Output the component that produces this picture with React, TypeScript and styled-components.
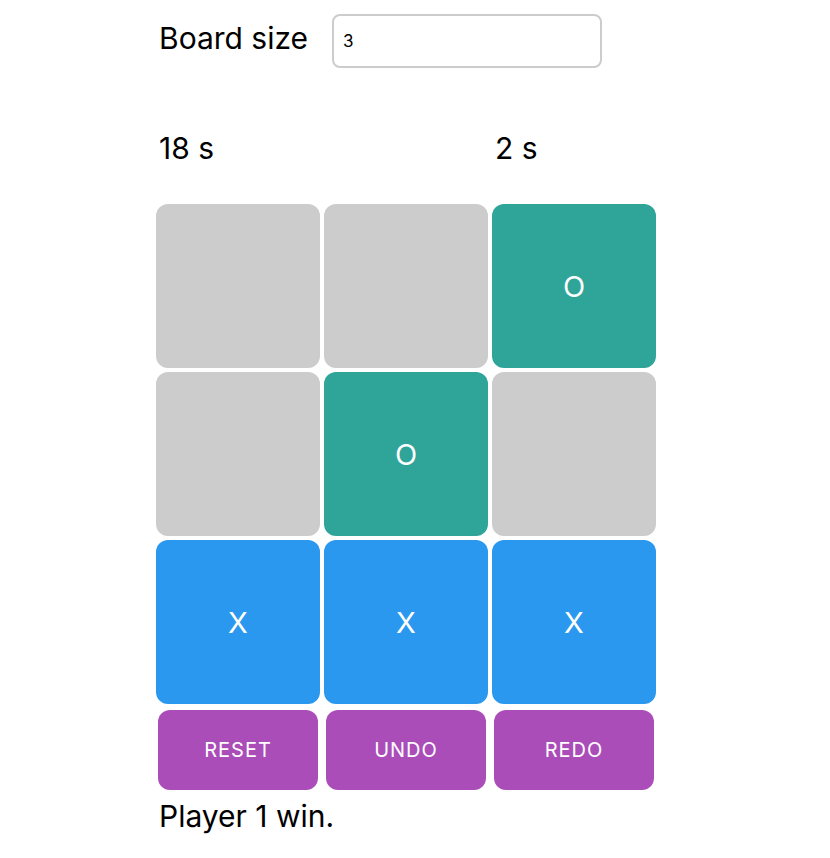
import * as React from "react"
import styled, { createGlobalStyle } from "styled-components"

const GlobalStyle = createGlobalStyle`
  body {
    margin: 0;
    background: #ffffff;
    font-family: Inter, "Noto Sans", sans-serif;
    color: #000000;
  }
`

const Page = styled.div`
  padding: 14px 0 0 156px;
  width: 500px;
`

const SizeRow = styled.label`
  display: flex;
  align-items: flex-start;
  gap: 24px;
  padding-left: 3px;
  font-size: 30px;
  line-height: 48px;
`

const SizeInput = styled.input`
  box-sizing: border-box;
  width: 270px;
  height: 54px;
  border: 2px solid #cccccc;
  border-radius: 8px;
  padding: 0 9px;
  font-family: inherit;
  font-size: 17px;
  color: #000000;
  outline: none;
`

const Timers = styled.div`
  display: grid;
  grid-template-columns: repeat(3, 164px);
  column-gap: 4px;
  margin-top: 62px;
  height: 74px;
  font-size: 30px;
`

const Timer = styled.div<{ col: number }>`
  grid-column: ${({ col }) => col};
  padding-left: 3px;
`

const Board = styled.div<{ size: number }>`
  display: grid;
  grid-template-columns: repeat(${({ size }) => size}, 164px);
  grid-auto-rows: 164px;
  gap: 4px;
`

const cellColors: Record<string, string> = {
  X: "#2b98ef",
  O: "#2fa59a",
  "": "#cccccc",
}

const Cell = styled.button<{ mark: string }>`
  border: none;
  border-radius: 12px;
  background: ${({ mark }) => cellColors[mark]};
  color: #ffffff;
  font-family: inherit;
  font-size: 29px;
  padding: 0;
`

const Controls = styled.div`
  display: grid;
  grid-template-columns: repeat(3, 160px);
  gap: 8px;
  padding: 6px 2px 0;
`

const ControlButton = styled.button`
  height: 80px;
  border: none;
  border-radius: 12px;
  background: #ab4db9;
  color: #ffffff;
  font-family: inherit;
  font-size: 20px;
  letter-spacing: 1px;
  text-transform: uppercase;
`

const Status = styled.div`
  margin-top: 8px;
  padding-left: 3px;
  font-size: 30px;
`

const cells = ["", "", "O", "", "O", "", "X", "X", "X"]

export default function App() {
  return (
    <>
      <GlobalStyle />
      <Page>
        <SizeRow>
          Board size
          <SizeInput defaultValue="3" />
        </SizeRow>
        <Timers>
          <Timer col={1}>18 s</Timer>
          <Timer col={3}>2 s</Timer>
        </Timers>
        <Board size={3}>
          {cells.map((m, i) => (
            <Cell key={i} mark={m}>
              {m}
            </Cell>
          ))}
        </Board>
        <Controls>
          <ControlButton>Reset</ControlButton>
          <ControlButton>Undo</ControlButton>
          <ControlButton>Redo</ControlButton>
        </Controls>
        <Status>Player 1 win.</Status>
      </Page>
    </>
  )
}
